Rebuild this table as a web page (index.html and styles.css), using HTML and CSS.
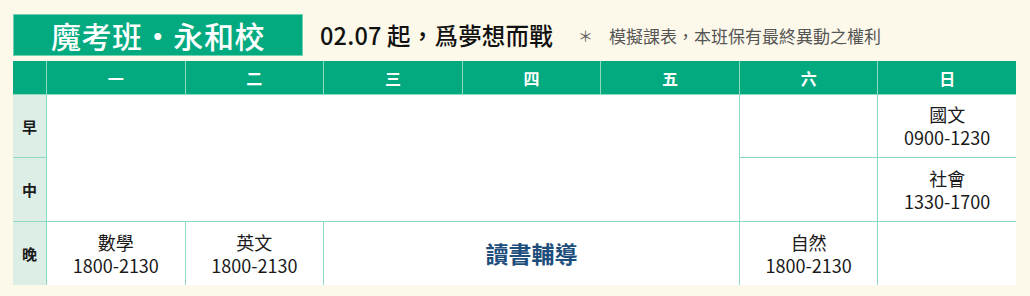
FILE: index.html
```html
<!DOCTYPE html>
<html lang="zh-Hant">
<head>
<meta charset="utf-8">
<link rel="stylesheet" href="styles.css">
</head>
<body>
<div class="page">
  <div class="top">
    <div class="title">魔考班・永和校</div>
    <div class="slogan">02.07 起，爲夢想而戰</div>
    <div class="note"><span class="star">＊</span>模擬課表，本班保有最終異動之權利</div>
  </div>
  <div class="grid">
    <div class="hd corner"></div>
    <div class="hd">一</div>
    <div class="hd">二</div>
    <div class="hd">三</div>
    <div class="hd">四</div>
    <div class="hd">五</div>
    <div class="hd">六</div>
    <div class="hd">日</div>

    <div class="lbl r2">早</div>
    <div class="cell big-empty"></div>
    <div class="cell c7 r2"></div>
    <div class="cell c8 r2"><span>國文</span><span>0900-1230</span></div>

    <div class="lbl r3">中</div>
    <div class="cell c7 r3"></div>
    <div class="cell c8 r3"><span>社會</span><span>1330-1700</span></div>

    <div class="lbl r4">晚</div>
    <div class="cell"><span>數學</span><span>1800-2130</span></div>
    <div class="cell"><span>英文</span><span>1800-2130</span></div>
    <div class="cell span3 study">讀書輔導</div>
    <div class="cell"><span>自然</span><span>1800-2130</span></div>
    <div class="cell"></div>
  </div>
</div>
</body>
</html>
```

FILE: styles.css
```css
* { box-sizing: border-box; }
html, body {
  margin: 0;
  padding: 0;
  background: #fdf9ea;
}
body {
  font-family: "Noto Sans CJK TC", "Noto Sans", sans-serif;
  color: #1a1a1a;
}
.page {
  width: 1030px;
  height: 296px;
  padding: 14px 14px 0 13px;
}
.top {
  display: flex;
  align-items: center;
  height: 42px;
}
.title {
  width: 290px;
  height: 42px;
  background: #03aa80;
  border: 1px solid #6fd3b2;
  color: #fff;
  font-size: 30px;
  font-weight: 500;
  line-height: 40px;
  text-align: center;
  letter-spacing: 0.6px;
}
.slogan {
  margin-left: 17px;
  font-size: 23.5px;
  font-weight: 500;
  color: #111;
  letter-spacing: 0.2px;
}
.note {
  margin-left: 25px;
  font-size: 17px;
  color: #555;
  display: flex;
  align-items: center;
}
.star {
  font-size: 15px;
  margin-right: 16px;
  color: #666;
}
.grid {
  margin-top: 5px;
  display: grid;
  grid-template-columns: 33px repeat(7, 1fr);
  grid-template-rows: 33px 62px 63px 63px;
  gap: 1px;
  background: #8edbc1;
  width: 1003px;
}
.hd {
  background: #03aa80;
  color: #fff;
  font-size: 16px;
  font-weight: 700;
  display: flex;
  align-items: center;
  justify-content: center;
}
.lbl {
  grid-column: 1;
  background: #dceee5;
  font-size: 15px;
  font-weight: 700;
  display: flex;
  align-items: center;
  justify-content: center;
}
.r2 { grid-row: 2; }
.r3 { grid-row: 3; }
.r4 { grid-row: 4; }
.c7 { grid-column: 7; }
.c8 { grid-column: 8; }
.cell {
  background: #fff;
  display: flex;
  flex-direction: column;
  align-items: center;
  justify-content: center;
  font-size: 18px;
  line-height: 23px;
  color: #1a1a1a;
}
.big-empty {
  grid-column: 2 / 7;
  grid-row: 2 / 4;
}
.span3 { grid-column: 4 / 7; }
.study {
  color: #1d4e7c;
  font-size: 23px;
  font-weight: 700;
}
```
